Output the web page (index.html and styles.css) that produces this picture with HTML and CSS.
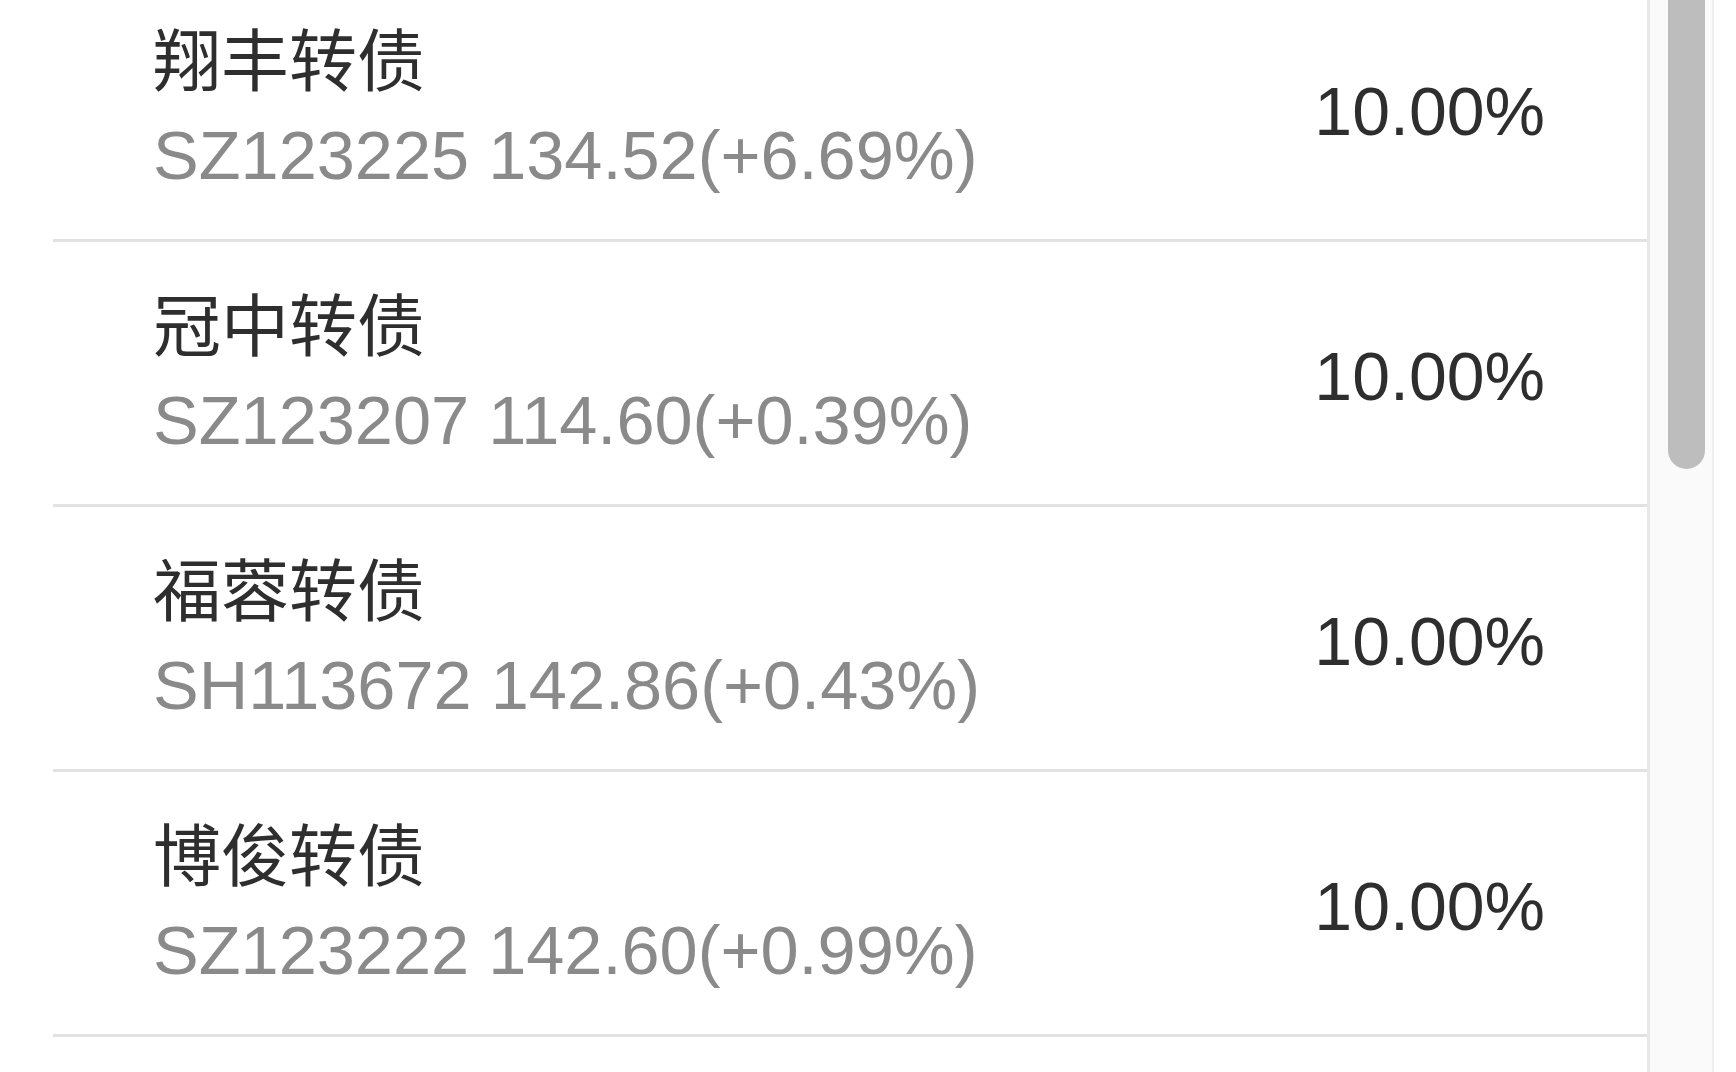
FILE: index.html
```html
<!DOCTYPE html>
<html lang="zh-CN">
<head>
<meta charset="utf-8">
<title>转债列表</title>
<link rel="stylesheet" href="styles.css">
</head>
<body>
<div class="screen">
  <div class="list">
    <div class="row">
      <div class="info">
        <div class="name">翔丰转债</div>
        <div class="quote">SZ123225 134.52(+6.69%)</div>
      </div>
      <div class="ratio">10.00%</div>
    </div>
    <div class="row">
      <div class="info">
        <div class="name">冠中转债</div>
        <div class="quote">SZ123207 114.60(+0.39%)</div>
      </div>
      <div class="ratio">10.00%</div>
    </div>
    <div class="row">
      <div class="info">
        <div class="name">福蓉转债</div>
        <div class="quote">SH113672 142.86(+0.43%)</div>
      </div>
      <div class="ratio">10.00%</div>
    </div>
    <div class="row">
      <div class="info">
        <div class="name">博俊转债</div>
        <div class="quote">SZ123222 142.60(+0.99%)</div>
      </div>
      <div class="ratio">10.00%</div>
    </div>
    <div class="row">
      <div class="info">
        <div class="name"></div>
        <div class="quote"></div>
      </div>
      <div class="ratio"></div>
    </div>
  </div>
  <div class="scrollbar">
    <div class="thumb"></div>
  </div>
</div>
</body>
</html>
```

FILE: styles.css
```css
html, body {
  margin: 0;
  padding: 0;
  background: #ffffff;
  overflow: hidden;
}

body {
  font-family: "Liberation Sans", "Noto Sans CJK SC", sans-serif;
}

.screen {
  display: flex;
  height: 1072px;
  overflow: hidden;
}

/* list scrolled slightly past the first row's top */
.list {
  flex: 0 0 1647px;
  margin-top: -23px;
}

.row {
  display: flex;
  align-items: center;
  justify-content: space-between;
  height: 262px;
  margin-left: 53px;
  padding: 0 102px 0 100px;
  border-bottom: 3px solid #e2e2e2;
}

.info {
  display: flex;
  flex-direction: column;
}

.name {
  font-size: 68px;
  line-height: 92px;
  padding-top: 3px;
  color: #2e2e2e;
  min-height: 92px;
}

.quote {
  font-size: 68.5px;
  line-height: 95px;
  color: #8a8a8a;
  min-height: 95px;
}

.ratio {
  font-size: 68px;
  padding-top: 6px;
  color: #2e2e2e;
}

.scrollbar {
  flex: 0 0 67px;
  box-sizing: border-box;
  border-left: 3px solid #e8e8e8;
  border-right: 2px solid #efefef;
  background: #fafafa;
  overflow: hidden;
}

.thumb {
  width: 37px;
  height: 496px;
  margin: -27px 0 0 18px;
  border-radius: 19px;
  background: #bdbdbd;
}
```
